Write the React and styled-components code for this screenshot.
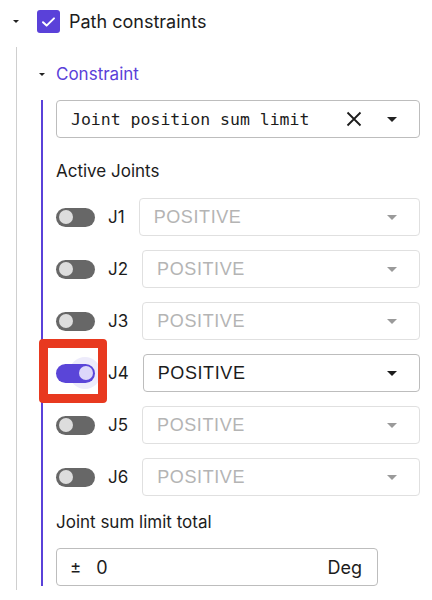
import React from 'react';
import styled, { createGlobalStyle } from 'styled-components';

const GlobalStyle = createGlobalStyle`
  body {
    margin: 0;
    background: #ffffff;
    font-family: Inter, "Noto Sans", sans-serif;
    color: #1a1a1a;
  }
`;

const PURPLE = '#5a41d9';

const Page = styled.div`
  width: 432px;
  height: 600px;
  padding-top: 10px;
  box-sizing: border-box;
  overflow: hidden;
`;

const TopRow = styled.div`
  display: flex;
  align-items: center;
  height: 23px;
  padding-left: 13px;
`;

const Caret = styled.span`
  width: 0;
  height: 0;
  border-left: ${(p) => p.$size}px solid transparent;
  border-right: ${(p) => p.$size}px solid transparent;
  border-top: ${(p) => Math.round(p.$size * 0.9)}px solid ${(p) => p.$color || '#222'};
  flex-shrink: 0;
`;

const CheckBox = styled.span`
  width: 23px;
  height: 23px;
  border-radius: 3px;
  background: ${PURPLE};
  margin-left: 18px;
  display: flex;
  align-items: center;
  justify-content: center;
`;

const TopLabel = styled.span`
  margin-left: 9px;
  font-size: 18px;
  color: #1c1c1c;
`;

const Tree = styled.div`
  margin-left: 16px;
  margin-top: 14px;
  border-left: 1px solid #cfcfcf;
  padding-top: 15px;
  padding-bottom: 4px;
`;

const SectionHeader = styled.div`
  display: flex;
  align-items: center;
  height: 24px;
  padding-left: 22px;
  gap: 11px;
`;

const SectionTitle = styled.span`
  font-size: 17px;
  color: ${PURPLE};
`;

const SectionBody = styled.div`
  margin-left: 24px;
  margin-top: 14px;
  border-left: 2px solid ${PURPLE};
  padding-left: 13px;
  width: 364px;
  display: flex;
  flex-direction: column;
`;

const Box = styled.div`
  height: 38px;
  box-sizing: border-box;
  border: 1px solid ${(p) => (p.$disabled ? '#e0e0e0' : '#bdbdbd')};
  border-radius: 4px;
  display: flex;
  align-items: center;
  padding: 0 ${(p) => p.$padR || 22}px 0 ${(p) => p.$padL || 14}px;
  background: #fff;
`;

const MonoText = styled.span`
  font-family: "DejaVu Sans Mono", "Liberation Mono", monospace;
  font-size: 16.5px;
  color: #1c1c1c;
  flex: 1;
`;

const Label = styled.div`
  font-size: 17px;
  line-height: 24px;
  margin-top: ${(p) => p.$mt}px;
  color: #1c1c1c;
`;

const JointList = styled.div`
  display: flex;
  flex-direction: column;
  gap: 14px;
  margin-top: 15px;
`;

const JointRow = styled.div`
  display: flex;
  align-items: center;
`;

const ToggleWrap = styled.div`
  position: relative;
  width: 39px;
  height: 19px;
  flex-shrink: 0;
`;

const Track = styled.div`
  width: 39px;
  height: 19px;
  border-radius: 10px;
  background: ${(p) => (p.$on ? '#5a45d8' : '#676767')};
  position: relative;
`;

const Knob = styled.div`
  position: absolute;
  top: 2.5px;
  left: ${(p) => (p.$on ? '22.5px' : '2.5px')};
  width: 14px;
  height: 14px;
  border-radius: 50%;
  background: ${(p) => (p.$on ? '#dcd7fa' : '#dddddd')};
`;

const Halo = styled.div`
  position: absolute;
  width: 32px;
  height: 32px;
  border-radius: 50%;
  background: rgba(110, 90, 220, 0.12);
  left: 13px;
  top: -6.5px;
`;

const Highlight = styled.div`
  position: absolute;
  left: -17px;
  top: -25px;
  width: 68px;
  height: 64px;
  box-sizing: border-box;
  border: 9px solid #e8391f;
  border-radius: 4px;
  pointer-events: none;
`;

const JointName = styled.span`
  font-size: 17px;
  margin: 0 14px 0 13px;
  color: #1c1c1c;
`;

const SelectText = styled.span`
  flex: 1;
  font-family: "Liberation Sans", Arial, sans-serif;
  font-size: 18px;
  letter-spacing: 0.6px;
  color: ${(p) => (p.$disabled ? '#b4b4b4' : '#1c1c1c')};
`;

const JointSelect = styled(Box)`
  flex: 1;
`;

const NumberBox = styled(Box)`
  width: 322px;
  margin-top: 14px;
  padding: 0 15px 0 13px;
`;

const PlusMinus = styled.span`
  font-size: 17px;
  color: #1c1c1c;
  margin-right: 15px;
`;

const NumText = styled.span`
  font-size: 18px;
  color: #1c1c1c;
`;

const Unit = styled.span`
  margin-left: auto;
  font-size: 18px;
  color: #1c1c1c;
`;

const joints = [
  { id: 'J1', on: false },
  { id: 'J2', on: false },
  { id: 'J3', on: false },
  { id: 'J4', on: true },
  { id: 'J5', on: false },
  { id: 'J6', on: false },
];

const Toggle = ({ on, highlight }) => (
  <ToggleWrap>
    {on && <Halo />}
    <Track $on={on}>
      <Knob $on={on} />
    </Track>
    {highlight && <Highlight />}
  </ToggleWrap>
);

export default function App() {
  return (
    <Page>
      <GlobalStyle />
      <TopRow>
        <Caret $size={3.5} />
        <CheckBox>
          <svg width="15" height="12" viewBox="0 0 15 12">
            <path d="M2 6.2 L5.6 9.6 L13 2.4" fill="none" stroke="#fff" strokeWidth="2" strokeLinecap="round" strokeLinejoin="round" />
          </svg>
        </CheckBox>
        <TopLabel>Path constraints</TopLabel>
      </TopRow>
      <Tree>
        <SectionHeader>
          <Caret $size={3.5} />
          <SectionTitle>Constraint</SectionTitle>
        </SectionHeader>
        <SectionBody>
          <Box $padR={22}>
            <MonoText>Joint position sum limit</MonoText>
            <svg width="16" height="16" viewBox="0 0 16 16" style={{ marginRight: 25 }}>
              <path d="M1.5 1.5 L14.5 14.5 M14.5 1.5 L1.5 14.5" stroke="#1c1c1c" strokeWidth="1.8" />
            </svg>
            <Caret $size={5} />
          </Box>
          <Label $mt={21}>Active Joints</Label>
          <JointList>
            {joints.map((j) => (
              <JointRow key={j.id}>
                <Toggle on={j.on} highlight={j.on} />
                <JointName>{j.id}</JointName>
                <JointSelect $disabled={!j.on}>
                  <SelectText $disabled={!j.on}>POSITIVE</SelectText>
                  <Caret $size={5} $color={j.on ? '#1c1c1c' : '#9a9a9a'} />
                </JointSelect>
              </JointRow>
            ))}
          </JointList>
          <Label $mt={14}>Joint sum limit total</Label>
          <NumberBox>
            <PlusMinus>±</PlusMinus>
            <NumText>0</NumText>
            <Unit>Deg</Unit>
          </NumberBox>
        </SectionBody>
      </Tree>
    </Page>
  );
}
